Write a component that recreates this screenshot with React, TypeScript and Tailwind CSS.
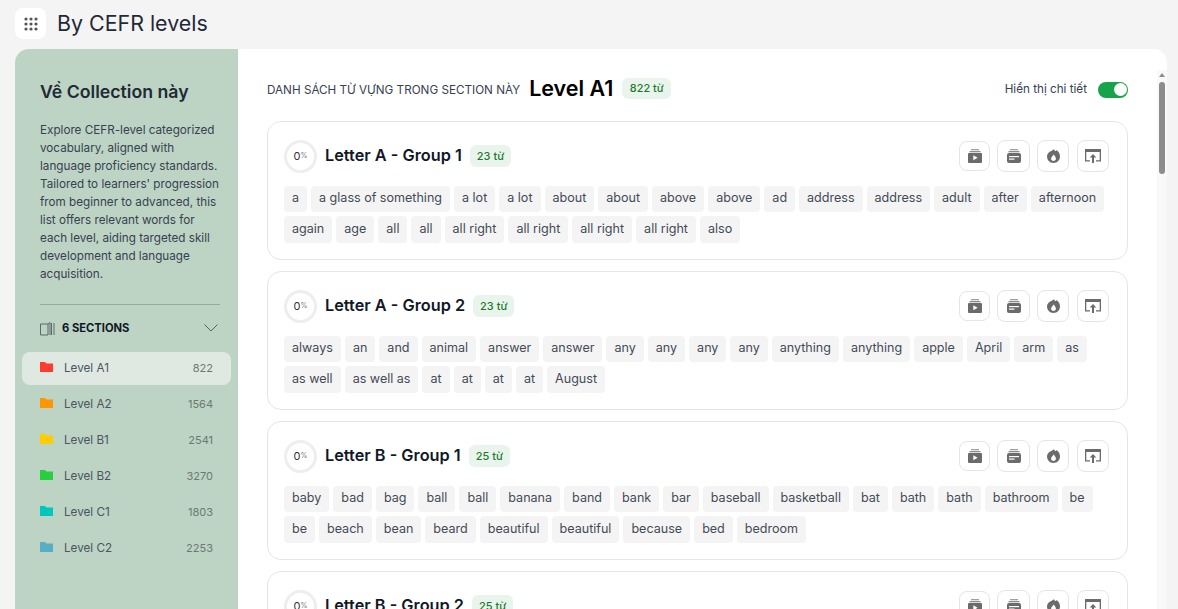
const sections = [
  { name: "Level A1", count: 822, color: "text-[#ff3b30]", active: true },
  { name: "Level A2", count: 1564, color: "text-[#ff9500]" },
  { name: "Level B1", count: 2541, color: "text-[#ffcc00]" },
  { name: "Level B2", count: 3270, color: "text-[#28cd41]" },
  { name: "Level C1", count: 1803, color: "text-[#00c7be]" },
  { name: "Level C2", count: 2253, color: "text-[#59adc4]" },
];

const groups = [
  {
    title: "Letter A - Group 1",
    count: 23,
    words: ["a", "a glass of something", "a lot", "a lot", "about", "about", "above", "above", "ad", "address", "address", "adult", "after", "afternoon", "again", "age", "all", "all", "all right", "all right", "all right", "all right", "also"],
  },
  {
    title: "Letter A - Group 2",
    count: 23,
    words: ["always", "an", "and", "animal", "answer", "answer", "any", "any", "any", "any", "anything", "anything", "apple", "April", "arm", "as", "as well", "as well as", "at", "at", "at", "at", "August"],
  },
  {
    title: "Letter B - Group 1",
    count: 25,
    words: ["baby", "bad", "bag", "ball", "ball", "banana", "band", "bank", "bar", "baseball", "basketball", "bat", "bath", "bath", "bathroom", "be", "be", "beach", "bean", "beard", "beautiful", "beautiful", "because", "bed", "bedroom"],
  },
  {
    title: "Letter B - Group 2",
    count: 25,
    words: ["bedroom", "beer", "before", "begin", "behind"],
  },
];

const GridDots = () => (
  <svg width="14" height="14" viewBox="0 0 14 14" fill="#555">
    {[2, 7, 12].map((y) =>
      [2, 7, 12].map((x) => <circle key={`${x}-${y}`} cx={x} cy={y} r="1.6" />)
    )}
  </svg>
);

const Folder = ({ className }: { className: string }) => (
  <svg width="13" height="10" viewBox="0 0 13 10" fill="currentColor" className={className}>
    <path d="M0 0h5l1.500 1.500H13V10H0z" />
  </svg>
);

const PlayStack = () => (
  <svg width="14" height="14" viewBox="0 0 14 14" fill="#6b6b6b">
    <rect x="3" y="0" width="8" height="1.300" fill="#a0a0a0" />
    <rect x="1.500" y="2" width="11" height="1.300" fill="#8c8c8c" />
    <rect x="0" y="4" width="14" height="10" rx="1" />
    <path d="M5.300 6.300v5l4.300-2.500z" fill="#fff" />
  </svg>
);

const CardStack = () => (
  <svg width="14" height="14" viewBox="0 0 14 14" fill="#6b6b6b">
    <rect x="3" y="0" width="8" height="1.300" fill="#a0a0a0" />
    <rect x="1.500" y="2" width="11" height="1.300" fill="#8c8c8c" />
    <rect x="0" y="4" width="14" height="10" rx="2" />
    <rect x="2" y="7" width="10" height="1.200" fill="#fff" />
    <rect x="2" y="9.500" width="5.500" height="1.200" fill="#fff" />
  </svg>
);

const Flame = () => (
  <svg width="13" height="14" viewBox="0 0 13 14" fill="#6b6b6b">
    <path fillRule="evenodd" d="M7 0c.3 1.500 1.100 2.100 2 2.100.3-.3.500-.6.500-1C11.700 2.500 13 5 13 7.500 13 11.100 10.100 14 6.500 14S0 11.100 0 7.500c0-2.600 1.600-3.800 3.200-4.900C4.800 1.700 6.300 1.100 7 0zM6.800 5.300C6.400 6.600 4.100 7.600 4.100 9.700c0 1.300 1.100 2.200 2.400 2.200s2.400-.9 2.400-2.200c0-1.500-1.400-2.800-2.100-4.400z" />
  </svg>
);

const Upload = () => (
  <svg width="16" height="14" viewBox="0 0 16 14" fill="#6b6b6b">
    <path fillRule="evenodd" d="M0 0h16v12.500h-5v-1.300h3.700V3H1.300v8.200H5v1.300H0z" />
    <path d="M8 5l3.300 3.500H9V14H7V8.500H4.700z" />
  </svg>
);

const SectionsIcon = () => (
  <svg width="15" height="15" viewBox="0 0 15 15" fill="none" stroke="#5d6966" strokeWidth="1">
    <path d="M.5 3h7.500v11H.5z" />
    <path d="M8 3l2-1.500V14" />
    <path d="M11.500 2v12M14 2v12" />
  </svg>
);

const Chevron = () => (
  <svg width="14" height="8" viewBox="0 0 14 8" fill="none" stroke="#56635f" strokeWidth="1">
    <path d="M.5.500L7 7l6.500-6.500" />
  </svg>
);

const actionIcons = [
  { icon: <PlayStack />, w: "w-[31px] h-[30px]" },
  { icon: <CardStack />, w: "w-[33px] h-[32px]" },
  { icon: <Flame />, w: "w-[32px] h-[32px]" },
  { icon: <Upload />, w: "w-[32px] h-[32px] ml-[1px]" },
];

const GroupCard = ({ title, count, words }: { title: string; count: number; words: string[] }) => (
  <div className="h-[139px] rounded-[14px] border border-[#e5e5e5] pl-4 pr-[18px] pt-[18px]">
    <div className="flex items-center justify-between h-[32px]">
      <div className="flex items-center">
        <div className="w-[33px] h-[33px] rounded-full border-[3px] border-[#eeeeee] flex items-center justify-center text-[#333] text-[11px]">
          0<span className="text-[7px] text-[#777]">%</span>
        </div>
        <span className="ml-[8px] -mt-[2px] text-[16.300px] font-semibold text-[#111827]">{title}</span>
        <span className="ml-[8px] h-[22px] px-[7px] rounded-[6px] bg-[#e9f5ec] text-[#1d7a2c] text-[11px] font-medium flex items-center">
          {count} từ
        </span>
      </div>
      <div className="flex items-center gap-[7px]">
        {actionIcons.map((a, i) => (
          <button key={i} className={`${a.w} rounded-[8px] border border-[#e5e5e5] bg-white flex items-center justify-center`}>
            {a.icon}
          </button>
        ))}
      </div>
    </div>
    <div className="flex flex-wrap gap-[4px] mt-[13.500px] -mr-[2px]">
      {words.map((w, i) => (
        <span key={i} className="h-[26.500px] px-2 rounded-[4px] bg-[#f4f4f4] text-[#444b57] text-[12.550px] flex items-center">
          {w}
        </span>
      ))}
    </div>
  </div>
);

export default function App() {
  return (
    <div className="h-[609px] overflow-hidden bg-[#f4f4f4] font-['Inter',sans-serif] flex flex-col">
      <header className="h-[49px] shrink-0 flex items-start pl-[15px] pt-2">
        <div className="w-[31px] h-[31px] rounded-[8px] bg-white flex items-center justify-center">
          <GridDots />
        </div>
        <h1 className="ml-[11px] text-[21.400px] leading-[31px] text-[#1f2937] font-normal">By CEFR levels</h1>
      </header>
      <div className="flex-1 min-h-0 ml-[15px] mr-[11px] flex rounded-t-[14px] overflow-hidden bg-white">
        <aside className="w-[223px] shrink-0 bg-[#bdd3c3] pt-[30px]">
          <div className="pl-[25px] pr-[18px]">
            <h2 className="text-[17.700px] leading-[25px] font-semibold text-[#1f2937]">Về Collection này</h2>
            <p className="mt-[17px] text-[11.700px] leading-[18px] text-[#374151]">
              Explore CEFR-level categorized vocabulary, aligned with language proficiency standards. Tailored to learners' progression from beginner to advanced, this list offers relevant words for each level, aiding targeted skill development and language acquisition.
            </p>
            <div className="mt-[21px] border-t border-[#98a89e]" />
            <div className="mt-[15px] h-[16px] flex items-center justify-between pr-[2px]">
              <div className="flex items-center gap-[7px]">
                <SectionsIcon />
                <span className="text-[11.200px] font-bold text-[#111827]">6 SECTIONS</span>
              </div>
              <Chevron />
            </div>
          </div>
          <div className="mt-[16px] pl-[7px] pr-[7px]">
            {sections.map((s) => (
              <div key={s.name} className={`h-[33px] mb-[3px] pl-[18px] pr-[18px] rounded-[8px] flex items-center justify-between ${s.active ? "bg-[#dfe9e2]" : ""}`}>
                <div className="flex items-center gap-[11px]">
                  <Folder className={`${s.color} -mt-[2px]`} />
                  <span className="text-[11.700px] text-[#4b5563]">{s.name}</span>
                </div>
                <span className="text-[11px] text-[#6b7a74]">{s.count}</span>
              </div>
            ))}
          </div>
        </aside>
        <main className="flex-1 min-w-0 flex">
          <div className="flex-1 min-w-0 pl-[29px] pr-[29px] pt-[24px]">
            <div className="flex items-center justify-between h-[30px]">
              <div className="flex items-center">
                <span className="text-[11.700px] mt-[6px] text-[#374151]">DANH SÁCH TỪ VỰNG TRONG SECTION NÀY</span>
                <span className="ml-[9px] text-[21.500px] font-semibold text-black">Level A1</span>
                <span className="ml-[9px] h-[21px] px-[7.500px] rounded-[6px] bg-[#e9f5ec] text-[#1d7a2c] text-[10.900px] font-medium flex items-center">822 từ</span>
              </div>
              <div className="flex items-center gap-[11px] mt-[4px]">
                <span className="text-[11.700px] text-[#374151]">Hiển thị chi tiết</span>
                <div className="w-[30px] h-[16px] rounded-full bg-[#16a34a] flex items-center justify-end pr-[1.500px]">
                  <div className="w-[13px] h-[13px] rounded-full bg-white" />
                </div>
              </div>
            </div>
            <div className="mt-[18px] flex flex-col gap-[11px]">
              {groups.map((g) => (
                <GroupCard key={g.title} {...g} />
              ))}
            </div>
          </div>
          <div className="w-[10px] shrink-0 mt-[21px] relative bg-[#f9f9f9]">
            <div className="absolute left-[2px] top-[3px] w-0 h-0 border-x-[3px] border-x-transparent border-b-[4px] border-b-[#8c8c8c]" />
            <div className="absolute left-[2px] top-[12px] w-[6px] h-[92px] rounded-full bg-[#8c8c8c]" />
          </div>
        </main>
      </div>
    </div>
  );
}
